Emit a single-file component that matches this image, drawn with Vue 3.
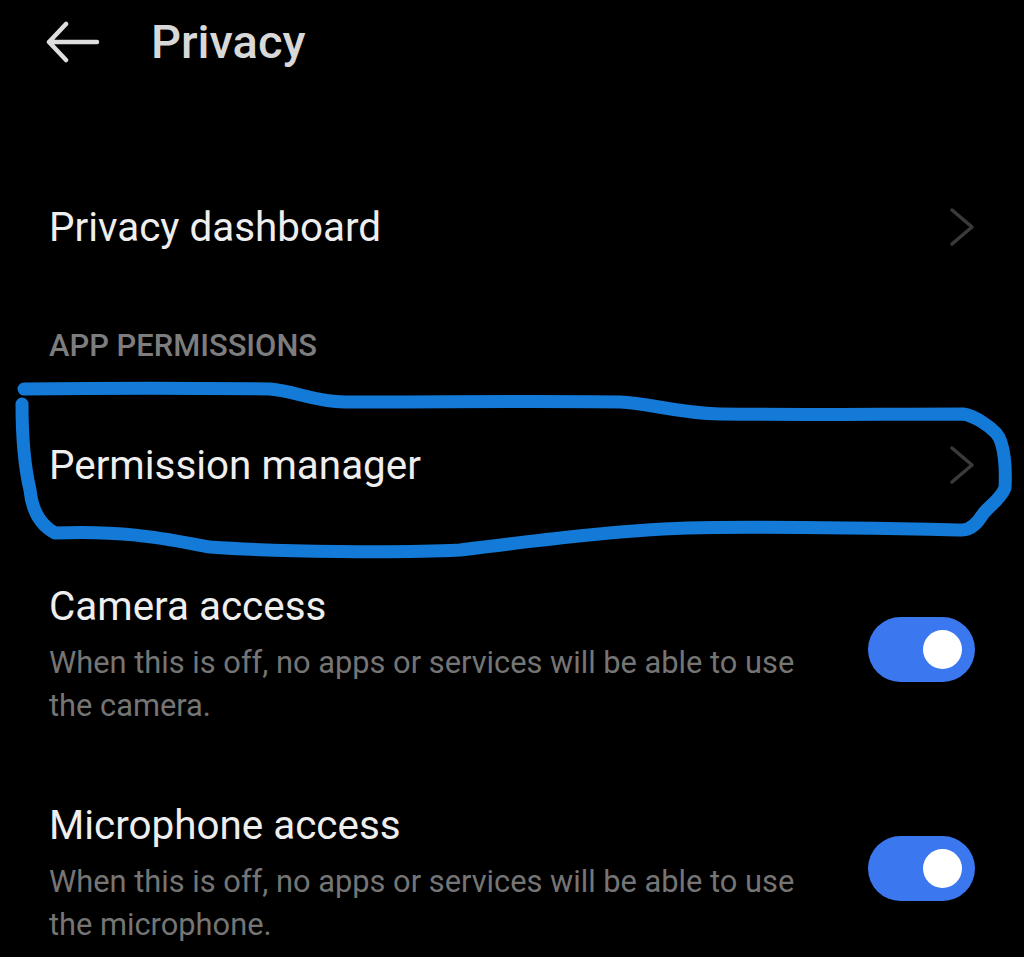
<script setup>
const toggles = [
  { title: 'Camera access', line1: 'When this is off, no apps or services will be able to use', line2: 'the camera.' },
  { title: 'Microphone access', line1: 'When this is off, no apps or services will be able to use', line2: 'the microphone.' },
]
</script>

<template>
  <main class="screen">
    <header class="header">
      <svg class="back" viewBox="0 0 54 42" aria-hidden="true">
        <path d="M51 21H3M20 3 3 21l17 18" />
      </svg>
      <h1>Privacy</h1>
    </header>

    <section class="row dashboard">
      <span class="title">Privacy dashboard</span>
      <svg class="chev" viewBox="0 0 26 40" aria-hidden="true"><path d="M3 3l20 17L3 37" /></svg>
    </section>

    <h2 class="section">APP PERMISSIONS</h2>

    <section class="row manager">
      <span class="title">Permission manager</span>
      <svg class="chev" viewBox="0 0 26 40" aria-hidden="true"><path d="M3 3l20 17L3 37" /></svg>
    </section>

    <section v-for="t in toggles" :key="t.title" class="toggle-row">
      <div class="toggle-text">
        <div class="title">{{ t.title }}</div>
        <p>{{ t.line1 }}<br />{{ t.line2 }}</p>
      </div>
      <div class="switch"><span class="knob"></span></div>
    </section>

    <svg class="scribble" viewBox="0 0 1024 957" aria-hidden="true">
      <path d="M24 389C100 388 200 388 270 389C295 391 315 402 345 402C450 402 540 401 620 402C650 403 675 413 720 414C800 415 880 414 963 414C975 416 988 425 996 433C1005 443 1006 470 1005 488C1000 500 990 505 983 514C978 522 972 530 962 530C860 528 760 526 687 528C620 530 540 540 460 550C400 553 280 552 210 547C170 540 130 530 55 533C40 525 32 510 30 490C23 460 22 430 22 404" />
    </svg>
  </main>
</template>

<style>
html, body { background: #000; }
</style>

<style scoped>
.screen {
  position: relative;
  width: 1024px;
  height: 957px;
  overflow: hidden;
  background: #000;
  color: #eee;
  font-family: Roboto, "Noto Sans", sans-serif;
}
.header {
  display: flex;
  align-items: center;
  gap: 51px;
  height: 83px;
  padding-left: 46px;
}
.back { width: 54px; height: 42px; fill: none; stroke: #dedede; stroke-width: 4.5; stroke-linecap: round; stroke-linejoin: round; }
h1 { margin: 0; font-size: 47px; font-weight: 500; color: #d8d8d8; line-height: 1; }
.row {
  display: flex;
  align-items: center;
  justify-content: space-between;
  padding: 0 49px 0 49px;
  height: 60px;
}
.row .title { padding-top: 2px; }
.dashboard { margin-top: 114px; }
.manager { margin-top: 72px; }
.title { font-size: 40.4px; line-height: 46px; color: #eee; }
.chev { width: 26px; height: 40px; fill: none; stroke: #3a3a3a; stroke-width: 3.5; stroke-linecap: round; stroke-linejoin: round; }
.section { margin: 72px 0 0 49px; font-size: 30.9px; line-height: 34px; font-weight: 500; color: #7d7d7d; }
.toggle-row {
  display: flex;
  align-items: center;
  justify-content: space-between;
  padding: 0 49px 0 49px;
  height: 219px;
}
.manager + .toggle-row { margin-top: 79px; }
.toggle-text { align-self: flex-start; padding-top: 10px; }
.toggle-text p { margin: 11px 0 0; font-size: 30.8px; line-height: 43px; color: #757575; }
.switch {
  display: flex;
  align-items: center;
  justify-content: flex-end;
  width: 107px;
  height: 65px;
  padding-right: 13px;
  box-sizing: border-box;
  border-radius: 33px;
  background: #3b78f0;
  margin-top: -68px;
}
.knob { width: 39px; height: 39px; border-radius: 50%; background: #fff; }
.scribble { position: absolute; inset: 0; width: 1024px; height: 957px; fill: none; stroke: #137ad8; stroke-width: 13; stroke-linecap: round; stroke-linejoin: round; }
</style>
